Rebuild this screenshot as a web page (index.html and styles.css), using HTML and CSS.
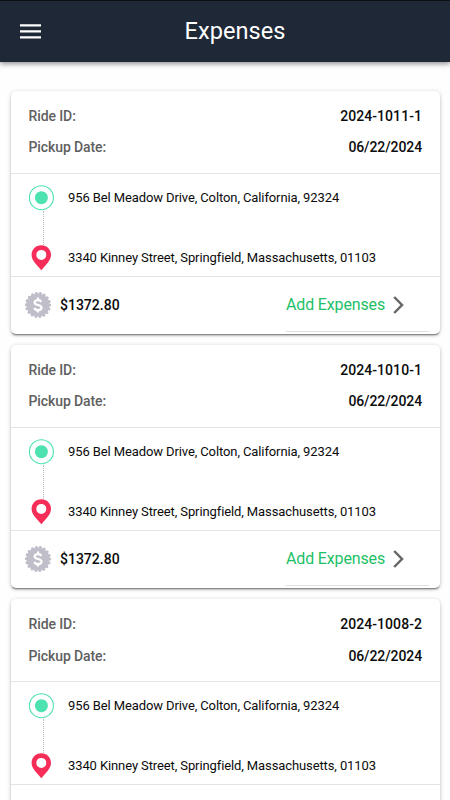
FILE: index.html
```html
<!DOCTYPE html>
<html lang="en">
<head>
<meta charset="utf-8">
<title>Expenses</title>
<link rel="stylesheet" href="styles.css">
</head>
<body>
<svg class="sprite" aria-hidden="true">
  <symbol id="start" viewBox="0 0 26 26"><circle cx="13.400" cy="12.700" r="12" fill="#fff" stroke="#4de2b0" stroke-width="1.1"/><circle cx="13.400" cy="12.700" r="6.500" fill="#4de2b0"/></symbol>
  <symbol id="pin" viewBox="0 0 20 26"><path transform="translate(.3 -.3)" fill="#f62d59" fill-rule="evenodd" d="M10 .5C4.500 .5.3 4.700.3 10c0 3 1.300 5.400 3.200 8L10 25.500 16.500 18c1.900-2.600 3.200-5 3.200-8C19.700 4.700 15.500.5 10 .5Zm0 4.700a5 5 0 1 1 0 10 5 5 0 0 1 0-10Z"/></symbol>
  <symbol id="seal" viewBox="0 0 28 28"><circle cx="14" cy="14" r="11.500" fill="#c0bec9"/><circle cx="14" cy="14" r="11.700" fill="none" stroke="#c0bec9" stroke-width="3" stroke-linecap="round" stroke-dasharray="0.010 4.074"/><path d="M17.300 10.900C16.700 9.700 15.600 9.100 14 9.100c-2 0-3.400.9-3.400 2.400 0 3.400 7 1.500 7 5.100 0 1.500-1.500 2.500-3.600 2.500-1.900 0-3.200-.8-3.700-2.100M14 6.500v2.600M14 19v2.600" fill="none" stroke="#fff" stroke-width="2.200"/></symbol>
  <symbol id="chevron" viewBox="0 0 12 20"><path d="M1.200 2 9 10 1.200 18" fill="none" stroke="#666" stroke-width="2.500"/></symbol>
</svg>
<header class="bar">
  <svg class="menu" viewBox="0 0 21 15"><path d="M0 1.300h21M0 7.300h21M0 13.300h21" stroke="#fff" stroke-width="2.300"/></svg>
  <h1 class="title">Expenses</h1>
</header>
<main class="list">
  <article class="card">
    <div class="meta">
      <div class="row"><span class="label">Ride ID:</span><span class="value">2024-1011-1</span></div>
      <div class="row"><span class="label">Pickup Date:</span><span class="value date">06/22/2024</span></div>
    </div>
    <div class="route">
      <div class="track"><svg class="start"><use href="#start"/></svg><span class="dots"></span><svg class="pin"><use href="#pin"/></svg></div>
      <div class="stops"><p class="stop">956 Bel Meadow Drive, Colton, California, 92324</p><p class="stop to">3340 Kinney Street, Springfield, Massachusetts, 01103</p></div>
    </div>
    <div class="foot"><svg class="seal"><use href="#seal"/></svg><span class="amount">$1372.80</span><a class="add"><span class="add-text">Add Expenses</span><svg class="chevron"><use href="#chevron"/></svg></a></div>
  </article>
  <article class="card">
    <div class="meta">
      <div class="row"><span class="label">Ride ID:</span><span class="value">2024-1010-1</span></div>
      <div class="row"><span class="label">Pickup Date:</span><span class="value date">06/22/2024</span></div>
    </div>
    <div class="route">
      <div class="track"><svg class="start"><use href="#start"/></svg><span class="dots"></span><svg class="pin"><use href="#pin"/></svg></div>
      <div class="stops"><p class="stop">956 Bel Meadow Drive, Colton, California, 92324</p><p class="stop to">3340 Kinney Street, Springfield, Massachusetts, 01103</p></div>
    </div>
    <div class="foot"><svg class="seal"><use href="#seal"/></svg><span class="amount">$1372.80</span><a class="add"><span class="add-text">Add Expenses</span><svg class="chevron"><use href="#chevron"/></svg></a></div>
  </article>
  <article class="card">
    <div class="meta">
      <div class="row"><span class="label">Ride ID:</span><span class="value">2024-1008-2</span></div>
      <div class="row"><span class="label">Pickup Date:</span><span class="value date">06/22/2024</span></div>
    </div>
    <div class="route">
      <div class="track"><svg class="start"><use href="#start"/></svg><span class="dots"></span><svg class="pin"><use href="#pin"/></svg></div>
      <div class="stops"><p class="stop">956 Bel Meadow Drive, Colton, California, 92324</p><p class="stop to">3340 Kinney Street, Springfield, Massachusetts, 01103</p></div>
    </div>
  </article>
</main>
</body>
</html>
```
FILE: styles.css
```css
* { box-sizing: border-box; }
body { margin: 0; height: 800px; overflow: hidden; background: #fefefe; font-family: Roboto, sans-serif; color: #0b0b0b; }
p, h1 { margin: 0; }
.sprite { display: none; }
svg { display: block; flex: none; overflow: visible; }
symbol { overflow: visible; }
.bar { position: relative; display: grid; grid-template-columns: 1fr auto 1fr; align-items: center; height: 62px; padding: 0 0 1px 20px; background: #1f2836; border-top: 1px solid #0c0f14; box-shadow: 0 2px 5px rgba(50, 35, 45, .5); }
.menu { width: 21px; height: 15px; }
.title { font-size: 23.600px; font-weight: 400; line-height: 30px; color: #fff; }
.list { display: flex; flex-direction: column; gap: 11px; height: 738px; padding: 28.500px 10px 0 11px; overflow: hidden; }
.card { flex: none; height: 243.200px; background: #fff; border-radius: 5px; box-shadow: 0 2px 2px -1px rgba(0, 0, 0, .5), 0 1px 4px rgba(0, 0, 0, .22); }
.meta { height: 83.500px; padding: 10.500px 18px 0 17.500px; border-bottom: 1px solid #e4e4e4; }
.row { display: flex; justify-content: space-between; height: 31.300px; line-height: 31px; font-size: 14px; font-weight: 500; }
.label { color: #606060; letter-spacing: -.1px; }
.value { letter-spacing: .06px; }
.date { letter-spacing: -.1px; }
.route { display: flex; height: 103px; border-bottom: 1px solid #e4e4e4; }
.track { display: flex; flex-direction: column; align-items: center; width: 57px; padding: 10.500px 0 0 4px; }
.start, .pin { margin-left: -1px; }
.start { width: 26px; height: 26px; }
.dots { height: 34px; margin-left: 3px; border-left: 1px dotted #bbb; }
.pin { width: 20px; height: 26px; }
.stops { padding-top: 14px; }
.stop { font-size: 13px; line-height: 20px; letter-spacing: -.105px; white-space: nowrap; }
.to { margin-top: 40px; }
.foot { display: flex; align-items: center; height: 56px; padding: 0 11px 0 13px; }
.seal { width: 28px; height: 28px; }
.amount { margin-left: 8px; font-size: 14px; font-weight: 500; }
.add { display: flex; align-items: center; width: 143px; height: 54px; margin-left: auto; border-bottom: 1px solid #e0e0e0; }
.add-text { font-size: 16px; letter-spacing: -.15px; color: #1dbf68; }
.chevron { width: 12px; height: 20px; margin-left: 7.500px; }
```
